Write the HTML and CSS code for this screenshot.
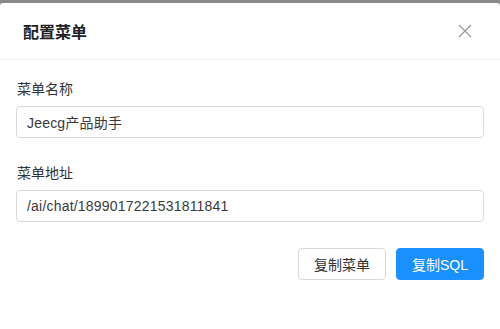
FILE: index.html
```html
<!DOCTYPE html>
<html>
<head>
  <title>配置菜单</title>
  <meta charset="UTF-8">
  <link rel="stylesheet" href="styles.css">
</head>
<body>
  <div class="modal">
    <div class="modal-header">
      <h1 class="modal-title">配置菜单</h1>
      <button class="modal-close" aria-label="close">
        <svg width="14" height="14" viewBox="0 0 14 14"><path d="M1 1L13 13M13 1L1 13" stroke="#999" stroke-width="1.3" fill="none"/></svg>
      </button>
    </div>
    <div class="modal-body">
      <div class="form-item">
        <label class="form-label">菜单名称</label>
        <input class="form-input" type="text" value="Jeecg产品助手">
      </div>
      <div class="form-item">
        <label class="form-label">菜单地址</label>
        <input class="form-input" type="text" value="/ai/chat/1899017221531811841">
      </div>
      <div class="modal-actions">
        <button class="btn btn-default">复制菜单</button>
        <button class="btn btn-primary">复制SQL</button>
      </div>
    </div>
  </div>
</body>
</html>
```

FILE: styles.css
```css
html, body {
  height: 100%;
}
body {
  margin: 0;
  padding-top: 3px;
  box-sizing: border-box;
  background-color: #8a8a8a;
  font-family: "Liberation Sans", "Noto Sans CJK SC", sans-serif;
  color: #333;
}
.modal {
  height: 100%;
  background-color: #fff;
  border-radius: 3px 3px 0 0;
}
.modal-header {
  display: flex;
  align-items: center;
  justify-content: space-between;
  height: 56px;
  padding: 0 28px 0 23px;
  border-bottom: 1px solid #eeeeee;
}
.modal-title {
  margin: 0;
  font-size: 16px;
  font-weight: 600;
  color: #222;
}
.modal-close {
  display: flex;
  padding: 0;
  border: none;
  background: none;
  cursor: pointer;
}
.modal-body {
  padding: 18px 16px 0 16px;
}
.form-item {
  display: flex;
  flex-direction: column;
  gap: 6px;
  margin-bottom: 24px;
}
.form-label {
  font-size: 14px;
  line-height: 22px;
  color: #333;
  padding-left: 1px;
}
.form-input {
  height: 32px;
  box-sizing: border-box;
  padding: 0 10px;
  font-family: inherit;
  font-size: 14px;
  letter-spacing: 0.2px;
  color: #3a3a3a;
  border: 1px solid #d9d9d9;
  border-radius: 4px;
  outline: none;
}
.modal-actions {
  display: flex;
  justify-content: flex-end;
  gap: 10px;
  padding-top: 2px;
}
.btn {
  width: 88px;
  height: 32px;
  font-family: inherit;
  font-size: 14px;
  border-radius: 4px;
  cursor: pointer;
}
.btn-default {
  background-color: #fff;
  color: #333;
  border: 1px solid #d9d9d9;
}
.btn-primary {
  background-color: #1890ff;
  color: #fff;
  border: 1px solid #1890ff;
}
```
